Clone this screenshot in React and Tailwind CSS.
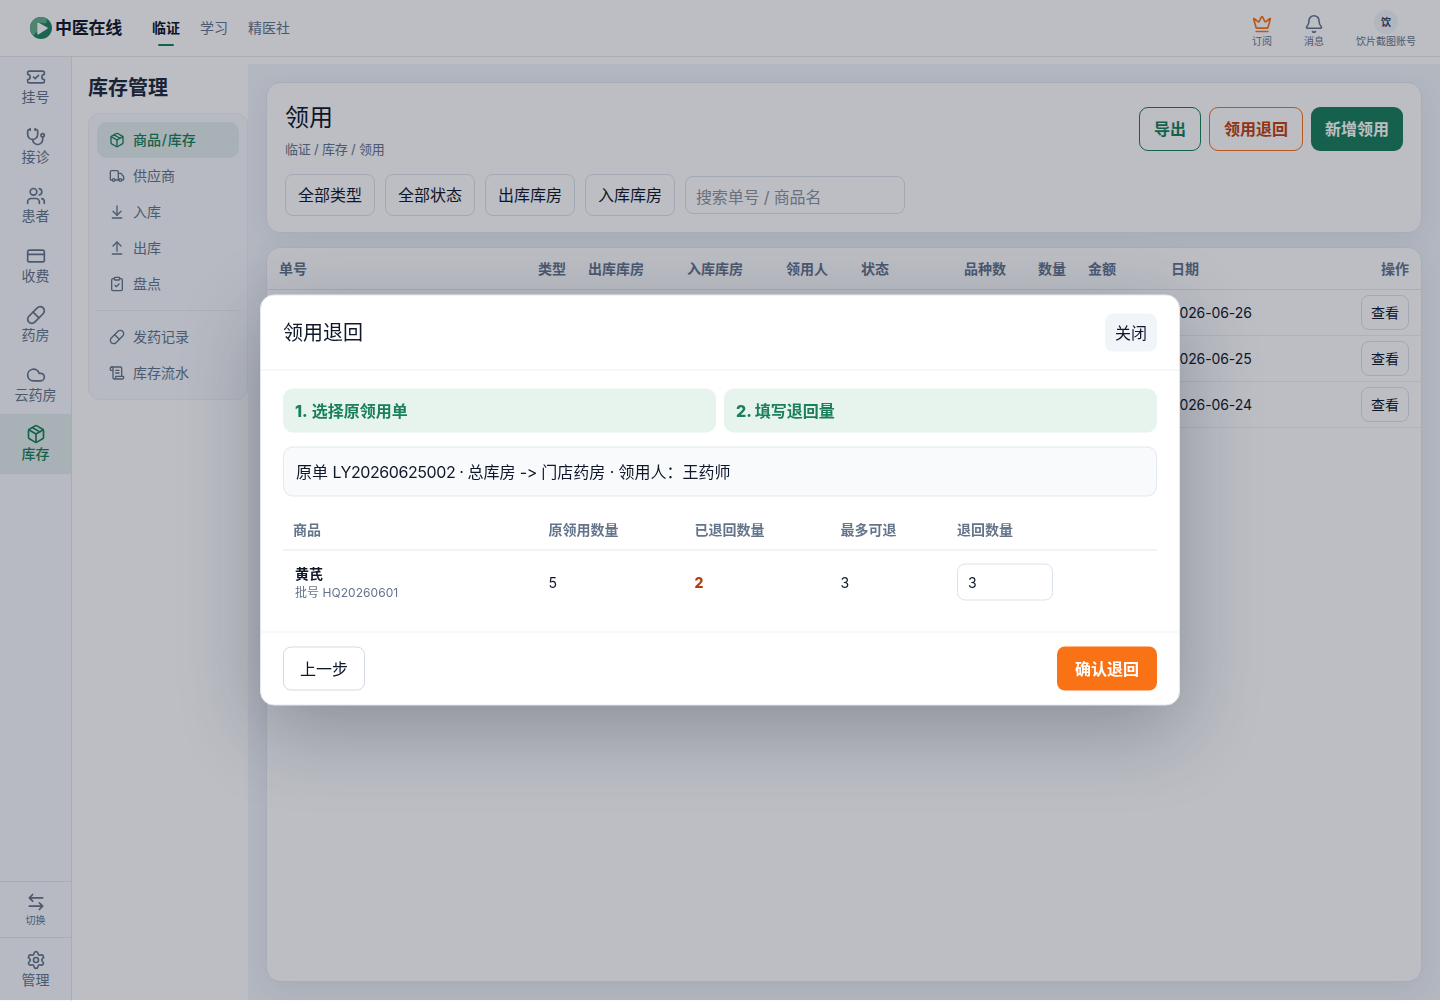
import React from "react";
import {
  TicketCheck, Stethoscope, Users, CreditCard, Pill, Cloud, Package, Settings,
  Truck, ArrowDownToLine, ArrowUpFromLine, ClipboardCheck, ScrollText, Bell, Crown,
} from "lucide-react";

const railItems = [
  ["挂号", TicketCheck],
  ["接诊", Stethoscope],
  ["患者", Users],
  ["收费", CreditCard],
  ["药房", Pill],
  ["云药房", Cloud],
  ["库存", Package],
];

function Logo() {
  return (
    <svg width="22" height="22" viewBox="0 0 22 22">
      <circle cx="11" cy="11" r="11" fill="#1f8560" />
      <path d="M11 0A11 11 0 0 0 3.2 18.8L7.5 14V5.2L16 6.5 17 1.8A11 11 0 0 0 11 0Z" fill="#66b08d" />
      <path d="M8 6.2v10.6L17 11.2Z" fill="#fff" stroke="#fff" strokeWidth="1.4" strokeLinejoin="round" />
      <circle cx="12.6" cy="4.6" r=".7" fill="#f97316" />
    </svg>
  );
}

function Header() {
  return (
    <header className="flex h-[57px] shrink-0 items-center border-b border-[#e5e7eb] bg-white pl-[30px] pr-6">
      <Logo />
      <span className="ml-[3px] text-[17px] leading-none font-semibold tracking-[-0.25px] text-[#0f172a]">中医在线</span>
      <nav className="ml-[30px] flex gap-5 text-sm text-[#64748b]">
        <span className="relative font-semibold text-[#0f172a]">
          临证
          <i className="absolute -bottom-[8px] left-1.5 h-0.5 w-4 rounded-full bg-[#1a7f5a]" />
        </span>
        <span>学习</span>
        <span>精医社</span>
      </nav>
      <div className="mb-0.5 ml-auto flex text-[10px] leading-[14px] text-[#64748b]">
        <div className="mt-[7px] flex w-[52px] flex-col items-center">
          <Crown size={20} strokeWidth={2} className="text-[#f97316]" />
          <span>订阅</span>
        </div>
        <div className="mt-[7px] flex w-[52px] flex-col items-center">
          <Bell size={20} strokeWidth={1.9} />
          <span>消息</span>
        </div>
        <div className="ml-4 mt-[3px] flex flex-col items-center">
          <span className="flex size-6 items-center justify-center rounded-full bg-[#f1f5f9] font-semibold text-[#334155]">饮</span>
          <span>饮片截图账号</span>
        </div>
      </div>
    </header>
  );
}

function Rail() {
  return (
    <aside className="flex w-[72px] shrink-0 flex-col border-r border-[#e5e7eb] bg-[#f8fafc] text-sm text-[#64748b]">
      {railItems.map(([label, Icon]) => (
        <div
          key={label}
          className={
            label === "库存"
              ? "flex h-[59.5px] flex-col items-center bg-[#e2eeec] pt-[10px] leading-5 font-medium text-[#1a7f5a]"
              : "flex h-[59.5px] flex-col items-center pt-[10px] leading-5"
          }
        >
          <Icon size={20} strokeWidth={2} />
          {label}
        </div>
      ))}
      <div className="mt-auto flex h-[56px] flex-col items-center border-t border-[#e5e7eb] pt-[10px] text-[10px] leading-4">
        <svg width="20" height="20" viewBox="0 0 24 24" fill="none" stroke="currentColor" strokeWidth="2" strokeLinecap="round" strokeLinejoin="round">
          <path d="M8 3 4 7l4 4M4 7h16M16 21l4-4-4-4M20 17H4" />
        </svg>
        切换
      </div>
      <div className="mb-px flex h-[63px] flex-col items-center border-t border-[#e5e7eb] pt-[12px] leading-5">
        <Settings size={20} strokeWidth={2} />
        管理
      </div>
    </aside>
  );
}

function MenuItem({ icon: Icon, children, active }) {
  return (
    <div
      className={
        active
          ? "flex h-9 items-center gap-2 rounded-[10px] bg-[#e2eeec] px-3 font-medium text-[#1a7f5a]"
          : "flex h-9 items-center gap-2 px-3"
      }
    >
      <Icon size={16} />
      <span>{children}</span>
    </div>
  );
}

function SubMenu() {
  return (
    <section className="w-[176px] shrink-0 pl-4">
      <h1 className="mt-4 text-xl leading-[30px] font-bold text-[#1e293b]">库存管理</h1>
      <div className="mt-[10px] rounded-xl border border-[#edf0f1] bg-[#f8fafc] p-2 text-sm text-[#64748b]">
        <MenuItem icon={Package} active>
          商品<span className="mx-[0.8px]">/</span>库存
        </MenuItem>
        <MenuItem icon={Truck}>供应商</MenuItem>
        <MenuItem icon={ArrowDownToLine}>入库</MenuItem>
        <MenuItem icon={ArrowUpFromLine}>出库</MenuItem>
        <MenuItem icon={ClipboardCheck}>盘点</MenuItem>
        <div className="my-2 h-px bg-[#e8ebed]" />
        <MenuItem icon={Pill}>发药记录</MenuItem>
        <MenuItem icon={ScrollText}>库存流水</MenuItem>
      </div>
    </section>
  );
}

const columns = ["单号", "类型", "出库库房", "入库库房", "领用人", "状态", "品种数", "数量", "金额", "日期", "操作"];
const rowDates = ["2026-06-26", "2026-06-25", "2026-06-24"];
const tableGrid = "grid grid-cols-[259px_50px_99px_99px_75px_103px_74px_50px_83px_1fr_60px] items-center";

function Main() {
  return (
    <main className="mt-[7px] mb-px flex grow flex-col gap-[14px] bg-[#f2f5fa] p-[18px]">
      <section className="h-[151px] rounded-[14px] border border-[#e2e8f0] bg-white px-[18px] shadow-[0_8px_28px_rgba(15,23,42,0.06)]">
        <div className="flex h-[91px] items-start justify-between">
          <div>
            <h2 className="mt-[19px] text-2xl leading-8 text-[#0f172a]">领用</h2>
            <p className="mt-[5px] text-[13px] leading-5 tracking-[-0.2px] text-[#64748b]">临证 / 库存 / 领用</p>
          </div>
          <div className="mt-6 flex h-11 gap-2 text-base font-bold">
            <button className="w-[62px] rounded-[9px] border border-[#1a7f5a] text-[#1a7f5a]">导出</button>
            <button className="w-[94px] rounded-[9px] border border-[#f97316] text-[#c2410c]">领用退回</button>
            <button className="w-[92px] rounded-[9px] bg-[#1a7f5a] text-white">新增领用</button>
          </div>
        </div>
        <div className="flex items-center gap-2.5 text-base text-[#0f172a]">
          {["全部类型", "全部状态", "出库库房", "入库库房"].map((t) => (
            <button key={t} className="h-[42px] w-[90px] rounded-lg border border-[#dbe2ea]">{t}</button>
          ))}
          <input
            placeholder="搜索单号 / 商品名"
            className="h-[38px] w-[220px] rounded-lg border border-[#dbe2ea] px-2.5 pt-[3px] tracking-[-0.15px] placeholder:text-[#8e939d]"
          />
        </div>
      </section>
      <section className="grow rounded-[14px] border border-[#e2e8f0] bg-white text-sm text-[#0f172a] shadow-[0_8px_28px_rgba(15,23,42,0.06)]">
        <div className={tableGrid + " h-[42px] border-b border-[#e2e8f0] px-3 font-bold text-[#64748b]"}>
          {columns.map((c) => (
            <span key={c} className="last:text-right">{c}</span>
          ))}
        </div>
        {rowDates.map((date) => (
          <div key={date} className={tableGrid + " h-[46px] border-b border-[#ebeff3] px-3"}>
            <span className="col-start-10 tracking-[-0.1px]">{date}</span>
            <button className="ml-auto h-[35px] w-12 rounded-lg border border-[#dbe2ea]">查看</button>
          </div>
        ))}
      </section>
    </main>
  );
}

const lineGrid = "grid grid-cols-[255.5px_146px_146px_116.5px_1fr] items-center px-2.5";

function ReturnDialog() {
  return (
    <div className="fixed inset-x-0 top-0 h-[1000px] bg-[rgba(15,23,42,0.28)]">
      <div className="absolute top-1/2 left-1/2 h-[411px] w-[920px] -translate-x-1/2 -translate-y-1/2 rounded-[14px] border border-[#e2e8f0] bg-white text-[#0f172a] shadow-[0_24px_80px_rgba(15,23,42,0.28)]">
        <div className="flex h-[75px] items-center justify-between border-b border-[#eef2f7] px-[22px]">
          <h3 className="text-xl">领用退回</h3>
          <button className="h-[38px] w-[52px] rounded-lg bg-[#f1f5f9] text-base">关闭</button>
        </div>
        <div className="h-[262px] border-b border-[#eef2f7] px-[22px] pt-[18px]">
          <div className="grid grid-cols-2 gap-2 text-base font-bold text-[#1a7f5a]">
            <div className="flex h-11 items-center rounded-[10px] bg-[#e6f4ed] px-3">
              <span className="mr-1 font-extrabold">1.</span>选择原领用单
            </div>
            <div className="flex h-11 items-center rounded-[10px] bg-[#e6f4ed] px-3">
              <span className="mr-[3px] font-extrabold">2.</span>填写退回量
            </div>
          </div>
          <div className="mt-[14px] flex h-[50px] items-center rounded-[10px] border border-[#e2e8f0] bg-[#f8fafc] px-3 text-base">
            <p className="whitespace-pre [font-feature-settings:'calt'_0]">
              原单 <span className="tracking-[-0.43px]">LY20260625002 · </span>总库房<span className="tracking-[-0.3px]"> -&gt; </span>门店药房<span className="tracking-[-0.2px]"> · </span>领用人：王药师
            </p>
          </div>
          <div className={lineGrid + " mt-[14px] h-10 border-b border-[#e5eaf0] pb-0.5 text-sm font-bold text-[#64748b]"}>
            <span>商品</span>
            <span>原领用数量</span>
            <span>已退回数量</span>
            <span>最多可退</span>
            <span>退回数量</span>
          </div>
          <div className={lineGrid + " h-[63px] text-sm"}>
            <div className="pl-0.5">
              <div className="leading-5 font-bold">黄芪</div>
              <div className="text-xs leading-[18px] tracking-[0.05px] text-[#64748b]">批号 HQ20260601</div>
            </div>
            <span>5</span>
            <span className="font-extrabold text-[#b13c0c]">2</span>
            <span>3</span>
            <input defaultValue="3" className="mb-px h-[37px] w-24 rounded-lg border border-[#dbe2ea] px-2.5" />
          </div>
        </div>
        <div className="flex h-[72px] items-center justify-between px-[22px] text-base">
          <button className="h-11 w-[82px] rounded-lg border border-[#d3dae3]">上一步</button>
          <button className="h-11 w-[100px] rounded-lg bg-[#f97316] font-bold text-white">确认退回</button>
        </div>
      </div>
    </div>
  );
}

export default function App() {
  return (
    <div className="flex h-[1001px] w-[1440px] flex-col overflow-hidden bg-white font-['Inter','Noto_Sans_CJK_SC',sans-serif]">
      <Header />
      <div className="flex h-[944px] shrink-0">
        <Rail />
        <SubMenu />
        <Main />
      </div>
      <ReturnDialog />
    </div>
  );
}
